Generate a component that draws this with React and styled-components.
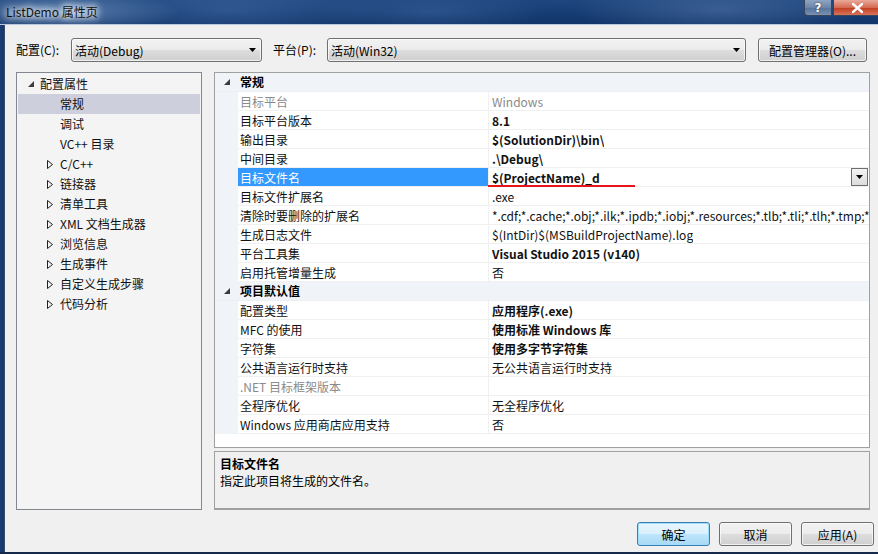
import React from 'react';
import styled, { createGlobalStyle, css } from 'styled-components';

const FONT = `"Noto Sans CJK SC", "Noto Sans", sans-serif`;

const GlobalStyle = createGlobalStyle`
  html, body {
    margin: 0;
    padding: 0;
    background: #0f2a55;
  }
  body {
    font-family: ${FONT};
    font-size: 12px;
    color: #000;
  }
`;

const TREE = [
  { label: '配置属性', level: 0, open: true },
  { label: '常规', level: 1, selected: true },
  { label: '调试', level: 1 },
  { label: 'VC++ 目录', level: 1 },
  { label: 'C/C++', level: 1, closed: true },
  { label: '链接器', level: 1, closed: true },
  { label: '清单工具', level: 1, closed: true },
  { label: 'XML 文档生成器', level: 1, closed: true },
  { label: '浏览信息', level: 1, closed: true },
  { label: '生成事件', level: 1, closed: true },
  { label: '自定义生成步骤', level: 1, closed: true },
  { label: '代码分析', level: 1, closed: true },
];

const SECTIONS = [
  {
    title: '常规',
    rows: [
      { name: '目标平台', value: 'Windows', dim: true },
      { name: '目标平台版本', value: '8.1', bold: true },
      { name: '输出目录', value: '$(SolutionDir)\\bin\\', bold: true },
      { name: '中间目录', value: '.\\Debug\\', bold: true },
      { name: '目标文件名', value: '$(ProjectName)_d', bold: true, selected: true },
      { name: '目标文件扩展名', value: '.exe' },
      {
        name: '清除时要删除的扩展名',
        value: '*.cdf;*.cache;*.obj;*.ilk;*.ipdb;*.iobj;*.resources;*.tlb;*.tli;*.tlh;*.tmp;*',
      },
      { name: '生成日志文件', value: '$(IntDir)$(MSBuildProjectName).log' },
      { name: '平台工具集', value: 'Visual Studio 2015 (v140)', bold: true },
      { name: '启用托管增量生成', value: '否' },
    ],
  },
  {
    title: '项目默认值',
    rows: [
      { name: '配置类型', value: '应用程序(.exe)', bold: true },
      { name: 'MFC 的使用', value: '使用标准 Windows 库', bold: true },
      { name: '字符集', value: '使用多字节字符集', bold: true },
      { name: '公共语言运行时支持', value: '无公共语言运行时支持' },
      { name: '.NET 目标框架版本', value: '', dim: true },
      { name: '全程序优化', value: '无全程序优化' },
      { name: 'Windows 应用商店应用支持', value: '否' },
    ],
  },
];

const ExpandedGlyph = () => (
  <svg width="6" height="6" viewBox="0 0 6 6">
    <polygon points="6,0 6,6 0,6" fill="#3c3c3c" />
  </svg>
);

const CollapsedGlyph = () => (
  <svg width="6" height="9" viewBox="0 0 6 9">
    <polygon points="0.5,0.5 5.5,4.5 0.5,8.5" fill="none" stroke="#1e1e1e" strokeWidth="1" />
  </svg>
);

const DownArrow = () => (
  <svg width="7" height="4" viewBox="0 0 7 4">
    <polygon points="0,0 7,0 3.5,4" fill="#000" />
  </svg>
);

const App = () => {
  return (
    <>
      <GlobalStyle />
      <Window>
        <TitleBar>
          <Title>ListDemo 属性页</Title>
          <CaptionButtons>
            <HelpBtn>?</HelpBtn>
            <CloseBtn>
              <svg width="11" height="10" viewBox="0 0 11 10">
                <path d="M1 1 L10 9 M10 1 L1 9" stroke="#fff" strokeWidth="2.4" strokeLinecap="square" />
              </svg>
            </CloseBtn>
          </CaptionButtons>
        </TitleBar>
        <Frame>
          <SideEdge />
          <Client>
            <TopRow>
              <Label $w={55}>配置(C):</Label>
              <Combo $w={191}>
                <span>活动(Debug)</span>
                <DownArrow />
              </Combo>
              <Label $w={54} $ml={11}>平台(P):</Label>
              <Combo $w={419}>
                <span>活动(Win32)</span>
                <DownArrow />
              </Combo>
              <Button $w={109} $ml={12}>配置管理器(O)...</Button>
            </TopRow>

            <Main>
              <Tree>
                {TREE.map((item) => (
                  <TreeRow key={item.label} $selected={item.selected}>
                    <TreeToggle $level={item.level}>
                      {item.open && <ExpandedGlyph />}
                      {item.closed && <CollapsedGlyph />}
                    </TreeToggle>
                    <TreeLabel $level={item.level}>{item.label}</TreeLabel>
                  </TreeRow>
                ))}
              </Tree>

              <RightCol>
                <Grid>
                  {SECTIONS.map((sec) => (
                    <React.Fragment key={sec.title}>
                      <CategoryRow>
                        <Gutter>
                          <ExpandedGlyph />
                        </Gutter>
                        <CategoryTitle>{sec.title}</CategoryTitle>
                      </CategoryRow>
                      {sec.rows.map((row) => (
                        <PropRow key={row.name}>
                          <Gutter />
                          <NameCell $selected={row.selected} $dim={row.dim}>
                            {row.name}
                          </NameCell>
                          <ValueCell $bold={row.bold} $dim={row.dim}>
                            <ValueText>{row.value}</ValueText>
                            {row.selected && (
                              <>
                                <RedMark />
                                <DropBtn>
                                  <DownArrow />
                                </DropBtn>
                              </>
                            )}
                          </ValueCell>
                        </PropRow>
                      ))}
                    </React.Fragment>
                  ))}
                </Grid>
                <Description>
                  <DescTitle>目标文件名</DescTitle>
                  <DescText>指定此项目将生成的文件名。</DescText>
                </Description>
              </RightCol>
            </Main>

            <ButtonRow>
              <Button $w={73} $default>确定</Button>
              <Button $w={73}>取消</Button>
              <Button $w={73}>应用(A)</Button>
            </ButtonRow>
          </Client>
        </Frame>
      </Window>
    </>
  );
};

export default App;

const Window = styled.div`
  width: 878px;
  height: 554px;
  display: flex;
  flex-direction: column;
  overflow: hidden;
  border-bottom: 2px solid #16294a;
  box-sizing: border-box;
`;

const TitleBar = styled.div`
  height: 24px;
  flex: none;
  display: flex;
  justify-content: space-between;
  align-items: flex-start;
  border-bottom: 1px solid #b9c8df;
  background:
    radial-gradient(ellipse 120px 22px at 60px 12px, rgba(150, 180, 220, 0.55), rgba(150, 180, 220, 0) 100%),
    radial-gradient(ellipse 160px 30px at 230px 10px, rgba(90, 130, 190, 0.35), rgba(90, 130, 190, 0) 100%),
    radial-gradient(ellipse 120px 20px at 430px 12px, rgba(90, 130, 190, 0.3), rgba(90, 130, 190, 0) 100%),
    radial-gradient(ellipse 150px 26px at 720px 10px, rgba(120, 150, 200, 0.35), rgba(120, 150, 200, 0) 100%),
    linear-gradient(#1f477f, #153b72 60%, #12356a);
`;

const Title = styled.div`
  margin: 4px 0 0 6px;
  font-size: 12px;
  line-height: 16px;
  color: #111;
  padding: 0 4px 0 0;
  text-shadow: 0 0 6px #fff, 0 0 8px #fff, 0 0 10px #e8f0fa;
`;

const CaptionButtons = styled.div`
  display: flex;
  gap: 1px;
  margin-right: -4px;
`;

const capBtn = css`
  height: 16px;
  box-sizing: border-box;
  display: flex;
  align-items: center;
  justify-content: center;
  border: 1px solid #38465c;
  border-top: none;
  font-family: "DejaVu Sans", sans-serif;
  font-weight: bold;
  color: #fff;
`;

const HelpBtn = styled.div`
  ${capBtn};
  width: 28px;
  font-size: 12px;
  border-radius: 0 0 0 4px;
  background: linear-gradient(#8fa4c2, #6d86a9 50%, #56729a 51%, #7891b3);
  text-shadow: 0 0 2px #223;
`;

const CloseBtn = styled.div`
  ${capBtn};
  width: 49px;
  border-radius: 0 0 4px 0;
  background: linear-gradient(#e9a99a, #d56a53 50%, #c13c1f 51%, #d8745a);
`;

const Frame = styled.div`
  flex: 1;
  display: flex;
  min-height: 0;
`;

const SideEdge = styled.div`
  width: 4px;
  flex: none;
  background: linear-gradient(90deg, #1a3d75, #14386f);
  border-right: 1px solid #3b4b63;
`;

const Client = styled.div`
  flex: 1;
  background: #f0f0f0;
  padding: 13px 0 0 11px;
  display: flex;
  flex-direction: column;
`;

const TopRow = styled.div`
  display: flex;
  align-items: center;
  height: 24px;
`;

const Label = styled.div`
  width: ${(p) => p.$w}px;
  margin-left: ${(p) => p.$ml || 0}px;
  flex: none;
  font-size: 12px;
  line-height: 16px;
`;

const winButtonBg = css`
  background: linear-gradient(#f2f2f2 0%, #ebebeb 50%, #dddddd 51%, #cfcfcf 100%);
  border: 1px solid #707070;
  border-radius: 3px;
  box-shadow: inset 0 0 0 1px rgba(255, 255, 255, 0.7);
`;

const Combo = styled.div`
  ${winButtonBg};
  width: ${(p) => p.$w}px;
  height: 24px;
  box-sizing: border-box;
  flex: none;
  display: flex;
  align-items: center;
  justify-content: space-between;
  padding: 0 5px 0 3px;
  font-size: 12px;
`;

const Button = styled.div`
  ${winButtonBg};
  width: ${(p) => p.$w}px;
  margin-left: ${(p) => p.$ml || 0}px;
  height: 24px;
  box-sizing: border-box;
  flex: none;
  display: flex;
  align-items: center;
  justify-content: center;
  font-size: 12px;
  ${(p) =>
    p.$default &&
    css`
      border-color: #3c7fb1;
      background: linear-gradient(#eaf6fd 0%, #d9f0fc 50%, #bee6fd 51%, #a7d9f5 100%);
      box-shadow: inset 0 0 0 1px #9fdcfb;
    `}
`;

const Main = styled.div`
  display: flex;
  margin-top: 10px;
  height: 438px;
`;

const Tree = styled.div`
  width: 186px;
  height: 438px;
  box-sizing: border-box;
  flex: none;
  border: 1px solid #828790;
  background: #f4f4f4;
  padding: 1px 1px 0;
`;

const TreeRow = styled.div`
  height: 20px;
  display: flex;
  align-items: center;
  background: ${(p) => (p.$selected ? '#cdd0dc' : 'transparent')};
`;

const TreeToggle = styled.div`
  width: 10px;
  flex: none;
  margin-left: ${(p) => (p.$level === 0 ? 10 : 29)}px;
  display: flex;
  align-items: center;
`;

const TreeLabel = styled.div`
  margin-left: ${(p) => (p.$level === 0 ? 2 : 3)}px;
  white-space: nowrap;
  font-size: 12px;
  line-height: 16px;
  color: #111;
`;

const RightCol = styled.div`
  width: 656px;
  flex: none;
  margin-left: 12px;
  display: flex;
  flex-direction: column;
`;

const Grid = styled.div`
  height: 377px;
  box-sizing: border-box;
  border: 1px solid #a0a0a0;
  background: #fff;
  overflow: hidden;
`;

const CategoryRow = styled.div`
  height: 19px;
  display: flex;
  align-items: center;
  background: #f0f4f9;
  border-bottom: 1px solid #eceff4;
  box-sizing: border-box;
`;

const Gutter = styled.div`
  width: 23px;
  height: 100%;
  flex: none;
  box-sizing: border-box;
  display: flex;
  align-items: center;
  justify-content: flex-end;
  padding-right: 8px;
  background: #f0f4f9;
`;

const CategoryTitle = styled.div`
  font-weight: bold;
  font-size: 12px;
  line-height: 16px;
  margin-left: 2px;
`;

const PropRow = styled.div`
  height: 19px;
  display: flex;
  box-sizing: border-box;
`;

const NameCell = styled.div`
  width: 251px;
  flex: none;
  box-sizing: border-box;
  padding-left: 2px;
  display: flex;
  align-items: center;
  border-bottom: 1px solid #f0f0f0;
  border-right: 1px solid #f0f0f0;
  white-space: nowrap;
  font-size: 12px;
  color: ${(p) => (p.$selected ? '#fff' : p.$dim ? '#8a8a8a' : '#111')};
  background: ${(p) => (p.$selected ? '#3399ff' : '#fff')};
`;

const ValueCell = styled.div`
  position: relative;
  flex: 1;
  min-width: 0;
  box-sizing: border-box;
  padding-left: 3px;
  display: flex;
  align-items: center;
  border-bottom: 1px solid #f0f0f0;
  font-size: 12px;
  font-weight: ${(p) => (p.$bold ? 'bold' : 'normal')};
  color: ${(p) => (p.$dim ? '#8a8a8a' : '#111')};
`;

const ValueText = styled.span`
  white-space: nowrap;
  overflow: hidden;
`;

const RedMark = styled.div`
  position: absolute;
  left: -1px;
  bottom: -1px;
  width: 147px;
  height: 2px;
  background: #e8141b;
`;

const DropBtn = styled.div`
  position: absolute;
  right: 1px;
  top: 0;
  width: 17px;
  height: 18px;
  box-sizing: border-box;
  border: 1px solid #6f6f6f;
  background: linear-gradient(#f4f4f4, #dcdcdc);
  display: flex;
  align-items: center;
  justify-content: center;
`;

const Description = styled.div`
  margin-top: 3px;
  height: 59px;
  box-sizing: border-box;
  border: 1px solid #a0a0a0;
  border-bottom-width: 2px;
  background: #f0f0f0;
  padding: 2px 5px;
`;

const DescTitle = styled.div`
  font-weight: bold;
  font-size: 12px;
  line-height: 19px;
`;

const DescText = styled.div`
  font-size: 12px;
  line-height: 16px;
`;

const ButtonRow = styled.div`
  display: flex;
  justify-content: flex-end;
  gap: 9px;
  margin-top: 12px;
  padding-right: 4px;
`;
